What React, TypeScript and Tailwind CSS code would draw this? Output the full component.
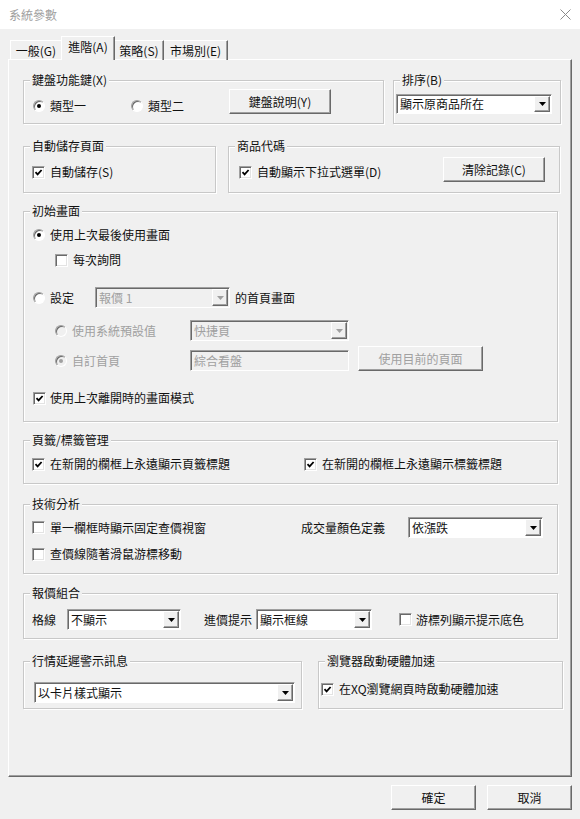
import type { ReactNode } from "react";

const Box = ({ checked }: { checked?: boolean }) => (
  <span className="flex h-[13px] w-[13px] shrink-0 items-center justify-center border border-[#a0a0a0] border-r-white border-b-white bg-white shadow-[inset_1px_1px_0_#696969,inset_-1px_-1px_0_#e3e3e3]">
    {checked && (
      <svg width="9" height="9" viewBox="0 0 9 9">
        <path d="M1.5 4.2 L3.6 6.4 L7.6 2" fill="none" stroke="#000" strokeWidth="1.8" />
      </svg>
    )}
  </span>
);

const Radio = ({ on, disabled }: { on?: boolean; disabled?: boolean }) => (
  <span
    className={
      disabled
        ? "flex h-[12px] w-[12px] shrink-0 items-center justify-center rounded-full border border-[#a0a0a0] border-r-white border-b-white bg-[#f0f0f0] shadow-[inset_1px_1px_0_#696969]"
        : "flex h-[12px] w-[12px] shrink-0 items-center justify-center rounded-full border border-[#a0a0a0] border-r-white border-b-white bg-white shadow-[inset_1px_1px_0_#696969]"
    }
  >
    {on && <span className={disabled ? "h-[4px] w-[4px] rounded-full bg-[#a0a0a0]" : "h-[4px] w-[4px] rounded-full bg-black"} />}
  </span>
);

const Combo = ({ text, cls, disabled }: { text: string; cls: string; disabled?: boolean }) => (
  <div
    className={`flex border border-[#a0a0a0] border-r-white border-b-white shadow-[inset_1px_1px_0_#696969] ${cls} ${
      disabled ? "bg-[#f0f0f0] text-[#a0a0a0]" : "bg-white"
    }`}
  >
    <span className="flex flex-1 items-center overflow-hidden whitespace-nowrap pl-[3px]">{text}</span>
    <span className="my-[1px] mr-[1px] flex w-[16px] items-center justify-center border border-white border-r-[#696969] border-b-[#696969] bg-[#f0f0f0] shadow-[inset_-1px_-1px_0_#a0a0a0]">
      <svg width="7" height="4" viewBox="0 0 7 4">
        <path d="M0 0 H7 L3.5 4 Z" fill={disabled ? "#a0a0a0" : "#000"} />
      </svg>
    </span>
  </div>
);

const Btn = ({ children, cls }: { children: ReactNode; cls: string }) => (
  <div
    className={`flex items-center justify-center border border-white border-r-[#696969] border-b-[#696969] bg-[#f0f0f0] shadow-[inset_-1px_-1px_0_#a0a0a0] ${cls}`}
  >
    {children}
  </div>
);

const Group = ({ title, cls, children }: { title: string; cls: string; children?: ReactNode }) => (
  <div className={`relative border border-[#c8c8c8] shadow-[inset_1px_1px_0_#fff,1px_1px_0_#fff] ${cls}`}>
    <span className="absolute -top-[9px] left-[6px] bg-[#f0f0f0] px-[2px]">{title}</span>
    {children}
  </div>
);

const App = () => {
  return (
    <div className="h-[819px] w-[580px] overflow-hidden bg-[#f0f0f0] font-['Noto_Sans_CJK_TC','Liberation_Sans',sans-serif] text-[12px] leading-[16px] text-[#111]">
      {/* title bar */}
      <div className="flex h-[29px] items-center justify-between bg-white pl-[9px] pr-[9px] text-[#a0a0a0]">
        <span>系統參數</span>
        <svg width="11" height="11" viewBox="0 0 11 11">
          <path d="M0.5 0.5 L10.5 10.5 M10.5 0.5 L0.5 10.5" stroke="#8a8a8a" strokeWidth="1" />
        </svg>
      </div>

      {/* tabs */}
      <div className="flex h-[31px] items-end pl-[10px]">
        <div className="flex h-[20px] w-[51px] items-center justify-center border-t border-l border-white">一般(G)</div>
        <div className="relative z-10 flex h-[24px] w-[54px] justify-center border-t border-r border-l border-white border-r-[#696969] bg-[#f0f0f0] pt-[2px] shadow-[inset_-1px_0_0_#a0a0a0]">
          進階(A)
        </div>
        <div className="flex h-[20px] w-[49px] items-center justify-center border-t border-r border-white border-r-[#696969] shadow-[inset_-1px_0_0_#a0a0a0]">
          策略(S)
        </div>
        <div className="flex h-[20px] w-[64px] items-center justify-center border-t border-r border-white border-r-[#696969] shadow-[inset_-1px_0_0_#a0a0a0]">
          市場別(E)
        </div>
      </div>

      {/* panel */}
      <div className="-mt-[1px] ml-[8px] flex h-[718px] w-[564px] flex-col border border-white border-r-[#696969] border-b-[#696969] pl-[14px] pt-[20px] shadow-[inset_-1px_-1px_0_#a0a0a0]">
        <div className="flex gap-[9px]">
          <Group title="鍵盤功能鍵(X)" cls="flex h-[44px] w-[361px] items-start pl-[9px]">
            <div className="mt-[17px] flex w-[98px] items-center gap-[5px]">
              <Radio on />
              類型一
            </div>
            <div className="mt-[17px] flex w-[98px] items-center gap-[5px]">
              <Radio />
              類型二
            </div>
            <Btn cls="mt-[8px] h-[25px] w-[102px]">鍵盤說明(Y)</Btn>
          </Group>
          <Group title="排序(B)" cls="h-[44px] w-[168px] pl-[2px] pt-[13px]">
            <Combo text="顯示原商品所在" cls="h-[20px] w-[156px]" />
          </Group>
        </div>

        <div className="mt-[22px] flex gap-[12px]">
          <Group title="自動儲存頁面" cls="h-[47px] w-[193px] pl-[8px] pt-[17px]">
            <div className="flex items-center gap-[5px]">
              <Box checked />
              自動儲存(S)
            </div>
          </Group>
          <Group title="商品代碼" cls="flex h-[47px] w-[332px] items-start pl-[10px] pr-[14px]">
            <div className="mt-[17px] flex items-center gap-[5px]">
              <Box checked />
              自動顯示下拉式選單(D)
            </div>
            <Btn cls="ml-auto mt-[10px] h-[25px] w-[102px]">清除記錄(C)</Btn>
          </Group>
        </div>

        <Group title="初始畫面" cls="mt-[18px] flex h-[211px] w-[535px] flex-col items-start pl-[9px]">
          <div className="mt-[15px] flex items-center gap-[5px]">
            <Radio on />
            使用上次最後使用畫面
          </div>
          <div className="ml-[22px] mt-[9px] flex items-center gap-[5px]">
            <Box />
            每次詢問
          </div>
          <div className="mt-[19px] flex h-[21px] items-center">
            <div className="flex w-[62px] items-center gap-[5px]">
              <Radio />
              設定
            </div>
            <Combo text="報價 1" cls="h-[21px] w-[135px]" disabled />
            <span className="ml-[5px]">的首頁畫面</span>
          </div>
          <div className="ml-[22px] mt-[12px] flex h-[21px] items-center">
            <div className="flex w-[135px] items-center gap-[5px] text-[#a0a0a0]">
              <Radio disabled />
              使用系統預設值
            </div>
            <Combo text="快捷頁" cls="h-[21px] w-[159px]" disabled />
          </div>
          <div className="ml-[22px] mt-[5px] flex items-start">
            <div className="mt-[7px] flex w-[135px] items-center gap-[5px] text-[#a0a0a0]">
              <Radio on disabled />
              自訂首頁
            </div>
            <div className="mt-[4px] flex h-[21px] w-[159px] items-center border border-[#a0a0a0] border-r-white border-b-white bg-[#f0f0f0] pl-[3px] text-[#a0a0a0] shadow-[inset_1px_1px_0_#696969]">
              綜合看盤
            </div>
            <Btn cls="ml-[9px] h-[25px] w-[125px] text-[#a0a0a0]">使用目前的頁面</Btn>
          </div>
          <div className="mt-[19px] flex items-center gap-[4px]">
            <Box checked />
            使用上次離開時的畫面模式
          </div>
        </Group>

        <Group title="頁籤/標籤管理" cls="mt-[18px] flex h-[44px] w-[535px] pl-[8px] pt-[15px]">
          <div className="flex h-[16px] w-[272px] items-center gap-[5px]">
            <Box checked />
            在新開的欄框上永遠顯示頁籤標題
          </div>
          <div className="flex h-[16px] items-center gap-[5px]">
            <Box checked />
            在新開的欄框上永遠顯示標籤標題
          </div>
        </Group>

        <Group title="技術分析" cls="mt-[20px] flex h-[70px] w-[535px] flex-col pl-[8px]">
          <div className="mt-[12px] flex h-[21px] items-center">
            <div className="flex w-[269px] items-center gap-[5px]">
              <Box />
              單一欄框時顯示固定查價視窗
            </div>
            <span className="w-[107px]">成交量顏色定義</span>
            <Combo text="依漲跌" cls="h-[21px] w-[135px]" />
          </div>
          <div className="mt-[8px] flex items-center gap-[5px]">
            <Box />
            查價線隨著滑鼠游標移動
          </div>
        </Group>

        <Group title="報價組合" cls="mt-[19px] h-[46px] w-[535px] pl-[8px] pt-[15px]">
          <div className="flex h-[21px] items-center">
            <span className="w-[35px]">格線</span>
            <Combo text="不顯示" cls="h-[21px] w-[114px]" />
            <span className="ml-[23px] w-[52px]">進價提示</span>
            <Combo text="顯示框線" cls="h-[21px] w-[116px]" />
            <div className="ml-[27px] flex items-center gap-[4px]">
              <Box />
              游標列顯示提示底色
            </div>
          </div>
        </Group>

        <div className="mt-[22px] flex gap-[16px]">
          <Group title="行情延遲警示訊息" cls="h-[48px] w-[279px] pl-[10px] pt-[20px]">
            <Combo text="以卡片樣式顯示" cls="h-[21px] w-[261px]" />
          </Group>
          <Group title="瀏覽器啟動硬體加速" cls="h-[48px] w-[245px] pl-[2px] pt-[19px]">
            <div className="flex items-center gap-[5px]">
              <Box checked />
              在XQ瀏覽網頁時啟動硬體加速
            </div>
          </Group>
        </div>
      </div>

      {/* dialog buttons */}
      <div className="mt-[8px] flex justify-end gap-[11px] pr-[8px]">
        <Btn cls="h-[25px] w-[85px]">確定</Btn>
        <Btn cls="h-[25px] w-[85px]">取消</Btn>
      </div>
    </div>
  );
};

export default App;
